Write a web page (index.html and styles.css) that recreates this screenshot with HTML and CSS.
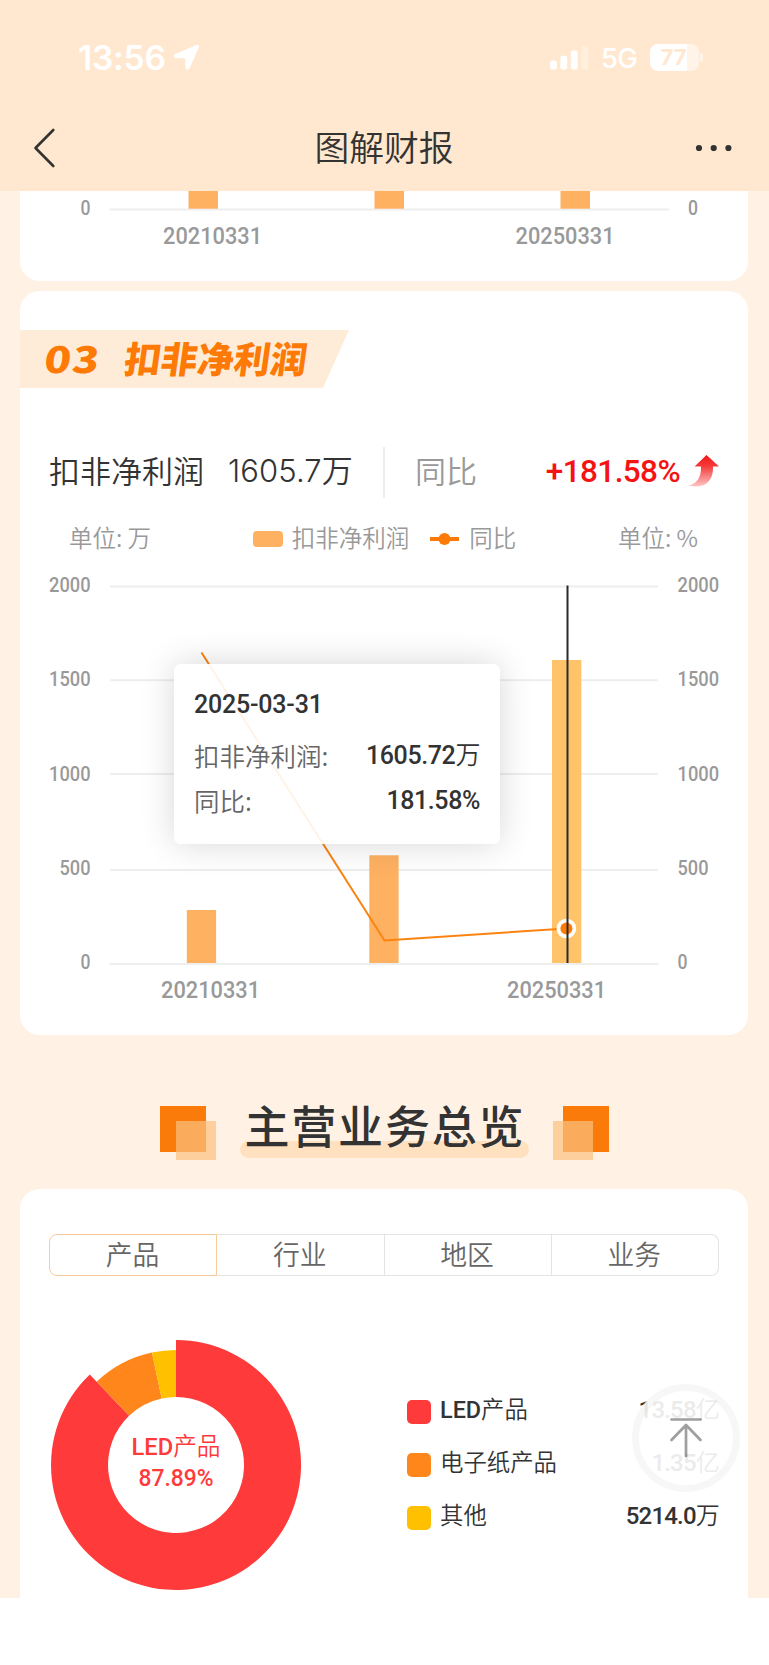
FILE: index.html
```html
<!DOCTYPE html>
<html lang="zh-CN">
<head>
    <meta charset="UTF-8">
    <meta name="viewport" content="width=device-width, initial-scale=1.0">
    <title>图解财报</title>
    <link rel="stylesheet" href="styles.css">
</head>
<body>
    <header class="header">
        <div class="status-bar">
            <div class="status-left">
                <span class="time">13:56</span>
                <svg width="27" height="27" viewBox="0 0 27 27"><path d="M24 1.2 L2.2 10.5 C.6 11.3 1 13.6 2.8 13.6 L12.6 13.8 L12.9 23.8 C13 25.6 15.3 26 16.1 24.4 L25.6 2.8 C26.1 1.6 25.2.7 24 1.2 Z" fill="#fff" stroke="#fff" stroke-width="1"/></svg>
            </div>
            <div class="status-right">
                <svg class="signal" width="39" height="24" viewBox="0 0 39 24" fill="#fff">
                    <rect x="0" y="14.5" width="6.8" height="9" rx="2"/>
                    <rect x="10.4" y="9.7" width="6.8" height="13.8" rx="2"/>
                    <rect x="20.8" y="4.5" width="6.8" height="19" rx="2"/>
                    <rect x="31.2" y="0" width="6.8" height="23.5" rx="2" opacity=".3"/>
                </svg>
                <span class="network">5G</span>
                <div class="battery">77</div>
                <span class="battery-cap"></span>
            </div>
        </div>
        <div class="nav">
            <svg width="24" height="40" viewBox="0 0 24 40"><path d="M20.3 2 L2.5 20 L20.3 38" fill="none" stroke="#333" stroke-width="2.6" stroke-linecap="round" stroke-linejoin="round"/></svg>
            <h1>图解财报</h1>
            <svg width="38" height="8" viewBox="0 0 38 8" fill="#333"><circle cx="4" cy="4" r="3.1"/><circle cx="18.7" cy="4" r="3.1"/><circle cx="33.4" cy="4" r="3.1"/></svg>
        </div>
    </header>

    <main class="content">
        <section class="card card-prev">
            <svg class="chart" width="728" height="90" viewBox="20 191 728 90">
                <line class="grid" x1="109.5" y1="209.5" x2="669" y2="209.5"/>
                <rect class="bar" x="188.5" y="185" width="29.5" height="23.7"/>
                <rect class="bar" x="374.5" y="185" width="29.5" height="23.7"/>
                <rect class="bar" x="560.5" y="185" width="29.5" height="23.7"/>
                <text class="axis" x="80.5" y="214.7" textLength="10" lengthAdjust="spacingAndGlyphs">0</text>
                <text class="axis" x="688" y="214.7" textLength="10" lengthAdjust="spacingAndGlyphs">0</text>
                <text class="axis-x" x="163" y="243.9" textLength="99" lengthAdjust="spacingAndGlyphs">20210331</text>
                <text class="axis-x" x="515.5" y="243.9" textLength="99" lengthAdjust="spacingAndGlyphs">20250331</text>
            </svg>
        </section>

        <section class="card card-profit">
            <div class="badge"><h2><span class="badge-no">03</span>扣非净利润</h2></div>
            <div class="summary">
                <span class="summary-name">扣非净利润</span>
                <span class="summary-value">1605.7万</span>
                <span class="summary-divider"></span>
                <span class="summary-label">同比</span>
                <span class="summary-rate">+181.58%</span>
                <svg class="summary-rise" width="31" height="32" viewBox="0 0 31 32">
                    <defs>
                        <linearGradient id="rise" x1="0" y1="0" x2="0" y2="1">
                            <stop offset="0" stop-color="#f51616"/>
                            <stop offset=".35" stop-color="#f53b3b"/>
                            <stop offset="1" stop-color="#fdc4c4"/>
                        </linearGradient>
                    </defs>
                    <path d="M18.5 0 L31 11.5 L25 11.5 C25.5 23 20 31.5 8 31.5 C5 31.5 2.5 31.2 0 30.6 C8 29.5 13.5 23 13 11.5 L6.5 11.5 Z" fill="url(#rise)"/>
                </svg>
            </div>
            <div class="legend">
                <span class="unit">单位: 万</span>
                <div class="legend-items">
                    <span class="swatch-bar"></span><span>扣非净利润</span>
                    <svg class="swatch-line" width="29" height="12" viewBox="0 0 29 12"><path d="M0 6 H29" stroke="#fc7a05" stroke-width="4"/><circle cx="14.5" cy="6" r="6" fill="#fc7a05"/></svg><span>同比</span>
                </div>
                <span class="unit">单位: %</span>
            </div>
            <div class="chart-box">
                <svg class="chart" width="728" height="440" viewBox="20 570 728 440">
                    <g class="grid">
                        <line x1="110" y1="586.5" x2="658" y2="586.5"/>
                        <line x1="110" y1="680.2" x2="658" y2="680.2"/>
                        <line x1="110" y1="774" x2="658" y2="774"/>
                        <line x1="110" y1="870" x2="658" y2="870"/>
                        <line x1="109.5" y1="964" x2="658.5" y2="964"/>
                    </g>
                    <rect class="bar" x="186.8" y="910" width="29.3" height="53"/>
                    <rect class="bar" x="369.3" y="855.3" width="29.3" height="107.7"/>
                    <rect class="bar bar-active" x="552" y="660" width="29.3" height="303"/>
                    <polyline points="201.5,652.5 384.5,940.5 566,928.5" fill="none" stroke="#fb8310" stroke-width="2"/>
                    <circle cx="566.4" cy="928.5" r="9.8" fill="#fff"/>
                    <circle cx="566.4" cy="928.5" r="6" fill="#fc7a05"/>
                    <line x1="567.5" y1="585.5" x2="567.5" y2="963" stroke="#2b2b2b" stroke-width="2"/>
                    <g class="axis">
                        <text x="49" y="592.2" textLength="41.5" lengthAdjust="spacingAndGlyphs">2000</text>
                        <text x="49" y="686.4" textLength="41.5" lengthAdjust="spacingAndGlyphs">1500</text>
                        <text x="49" y="780.5" textLength="41.5" lengthAdjust="spacingAndGlyphs">1000</text>
                        <text x="59.5" y="874.7" textLength="31" lengthAdjust="spacingAndGlyphs">500</text>
                        <text x="80.5" y="968.9" textLength="10" lengthAdjust="spacingAndGlyphs">0</text>
                        <text x="677.5" y="592.2" textLength="41.5" lengthAdjust="spacingAndGlyphs">2000</text>
                        <text x="677.5" y="686.4" textLength="41.5" lengthAdjust="spacingAndGlyphs">1500</text>
                        <text x="677.5" y="780.5" textLength="41.5" lengthAdjust="spacingAndGlyphs">1000</text>
                        <text x="677.5" y="874.7" textLength="31" lengthAdjust="spacingAndGlyphs">500</text>
                        <text x="677.5" y="968.9" textLength="10" lengthAdjust="spacingAndGlyphs">0</text>
                    </g>
                    <text class="axis-x" x="161" y="997.9" textLength="99" lengthAdjust="spacingAndGlyphs">20210331</text>
                    <text class="axis-x" x="507" y="997.9" textLength="99" lengthAdjust="spacingAndGlyphs">20250331</text>
                </svg>
                <div class="tooltip">
                    <div class="tooltip-date">2025-03-31</div>
                    <div class="tooltip-row"><span>扣非净利润:</span><b>1605.72万</b></div>
                    <div class="tooltip-row"><span>同比:</span><b>181.58%</b></div>
                </div>
            </div>
        </section>

        <div class="section-title">
            <svg width="56" height="56" viewBox="0 0 56 56"><rect width="46" height="46" fill="#fa7a0a"/><rect x="16" y="15" width="40" height="39" fill="#fbc17f" fill-opacity=".7"/></svg>
            <h2>主营业务总览</h2>
            <svg width="56" height="56" viewBox="0 0 56 56"><rect x="10" width="46" height="46" fill="#fa7a0a"/><rect y="15" width="40" height="39" fill="#fbc17f" fill-opacity=".7"/></svg>
        </div>

        <section class="card card-business">
            <div class="tabs">
                <div class="tab active">产品</div>
                <div class="tab">行业</div>
                <div class="tab">地区</div>
                <div class="tab">业务</div>
            </div>
            <div class="breakdown">
                <svg class="donut" width="252" height="252" viewBox="50 1339 252 252">
                    <path d="M176 1340 A125 125 0 1 1 89.8 1374.5 L129.1 1415.8 A68 68 0 1 0 176 1397 Z" fill="#ff3a3b"/>
                    <path d="M96.7 1381.7 A115 115 0 0 1 151.9 1352.6 L161.7 1398.5 A68 68 0 0 0 129.1 1415.8 Z" fill="#ff861b"/>
                    <path d="M151.9 1352.6 A115 115 0 0 1 176 1350 L176 1397 A68 68 0 0 0 161.7 1398.5 Z" fill="#ffc000"/>
                    <text x="176" y="1455.3" text-anchor="middle" textLength="89" lengthAdjust="spacingAndGlyphs">LED产品</text>
                    <text x="176" y="1486.3" text-anchor="middle" textLength="75" lengthAdjust="spacingAndGlyphs">87.89%</text>
                </svg>
                <ul class="product-list">
                    <li><i class="dot red"></i><span>LED产品</span><b>13.58亿</b></li>
                    <li><i class="dot orange"></i><span>电子纸产品</span><b>1.35亿</b></li>
                    <li><i class="dot yellow"></i><span>其他</span><b>5214.0万</b></li>
                </ul>
            </div>
        </section>
    </main>

    <div class="back-top">
        <svg width="36" height="42" viewBox="0 0 36 42" fill="none" stroke="#959595" stroke-width="2.7" stroke-linecap="round" stroke-linejoin="round"><path d="M3.5 2.5 H32.5 M18 8 V39 M3.5 23 L18 8 L32.5 23"/></svg>
    </div>
</body>
</html>
```
FILE: styles.css
```css
* {
    box-sizing: border-box;
}
body {
    margin: 0;
    width: 769px;
    height: 1665px;
    overflow: hidden;
    position: relative;
    background: #fff;
    color: #333;
    font-family: Roboto, "Noto Sans CJK SC DemiLight", "Noto Sans CJK SC", sans-serif;
}
h1, h2, ul {
    margin: 0;
    padding: 0;
}
svg {
    display: block;
    flex: none;
}
.header {
    height: 191px;
    background: #ffe8cf;
}
.status-bar {
    height: 115px;
    padding: 0 66px 0 78px;
    display: flex;
    justify-content: space-between;
    align-items: center;
    color: #fff;
    font-family: Inter, sans-serif;
}
.status-left, .status-right {
    display: flex;
    align-items: center;
}
.status-left {
    gap: 7px;
}
.time {
    font-size: 33.5px;
    font-weight: 600;
    letter-spacing: -0.2px;
}
.network {
    margin-left: 12px;
    width: 38px;
    font-size: 27.5px;
    font-weight: 500;
    letter-spacing: -0.8px;
}
.battery {
    margin-left: 11px;
    width: 49px;
    height: 27px;
    padding-right: 2px;
    border-radius: 8px;
    background: linear-gradient(to right, #fff 37px, #fff4e7 37px);
    color: #ffe8cf;
    font-size: 22px;
    font-weight: 700;
    line-height: 27px;
    text-align: center;
}
.battery-cap {
    width: 3px;
    height: 9px;
    margin-left: 1px;
    border-radius: 0 4px 4px 0;
    background: #fff4e7;
}
.nav {
    height: 66px;
    padding: 0 36px 0 33px;
    display: flex;
    align-items: center;
    justify-content: space-between;
}
.nav h1 {
    margin: -5px 0 0 16px;
    font: 350 34.8px/60px "Noto Sans CJK SC", sans-serif;
}
.content {
    height: 1407px;
    padding: 0 21px 0 20px;
    background: #fff2e4;
    overflow: hidden;
}
.card {
    background: #fff;
    border-radius: 20px;
}
.chart {
    font-family: Roboto, sans-serif;
}
.grid {
    stroke: #eee;
    stroke-width: 2;
}
.bar {
    fill: #feb161;
}
.bar-active {
    fill: #ffc46a;
}
.axis {
    font-size: 20px;
    font-weight: 500;
    fill: #999;
}
.axis-x {
    font-size: 24px;
    font-weight: 500;
    fill: #999;
}
.card-prev {
    height: 90px;
    border-radius: 0 0 20px 20px;
}
.card-profit {
    margin-top: 10px;
    height: 744px;
    padding-top: 39px;
}
.badge {
    width: 329px;
    height: 58px;
    padding-left: 25px;
    background: #ffecd8;
    clip-path: polygon(0 0, 100% 0, 303px 100%, 0 100%);
}
.badge h2 {
    color: #fc7a05;
    font: 900 36.5px/54px "Noto Sans CJK SC", sans-serif;
    transform: skewX(-8deg);
}
.badge-no {
    display: inline-block;
    width: 80px;
    font-size: 36px;
    letter-spacing: 1px;
    transform: scaleX(1.22);
    transform-origin: left;
}
.summary {
    margin-top: 59px;
    height: 51px;
    padding: 0 29px;
    display: flex;
    align-items: center;
    font: 350 31px/45px "Noto Sans CJK SC", sans-serif;
    white-space: nowrap;
}
.summary-name, .summary-label {
    margin-top: -6px;
}
.summary-value {
    margin-top: -5px;
    margin-left: 24px;
    width: 125px;
    font-family: Inter, "Noto Sans CJK SC", sans-serif;
    letter-spacing: 0.1px;
}
.summary-divider {
    margin-left: 30px;
    width: 2px;
    height: 51px;
    background: #eee;
}
.summary-label {
    margin-left: 30px;
    color: #999;
}
.summary-rate {
    margin-top: -2px;
    margin-left: auto;
    margin-right: 8px;
    color: #f51212;
    font-family: Roboto, sans-serif;
    font-size: 31.5px;
    font-weight: 500;
    letter-spacing: -0.6px;
}
.summary-rise {
    margin-top: -4px;
}
.legend {
    margin-top: 21px;
    height: 40px;
    padding: 0 50px 0 49px;
    display: flex;
    align-items: center;
    justify-content: space-between;
    color: #999;
    font: 350 23.5px/36px "Noto Sans CJK SC", sans-serif;
}
.legend span {
    padding-bottom: 4px;
}
.legend-items {
    display: flex;
    align-items: center;
}
.swatch-bar {
    width: 30px;
    height: 16px;
    margin-right: 9px;
    border-radius: 4px;
    background: #feb161;
}
.swatch-line {
    margin: 0 10px 0 21px;
}
.chart-box {
    position: relative;
    margin-top: 11px;
}
.tooltip {
    position: absolute;
    left: 154px;
    top: 94px;
    width: 326px;
    height: 180px;
    padding: 21px 20px 0 20px;
    border-radius: 7px;
    background: rgba(255, 255, 255, 0.9);
    box-shadow: 0 0 34px rgba(0, 0, 0, 0.16);
}
.tooltip-date {
    height: 49px;
    font-size: 25px;
    font-weight: 500;
    line-height: 40px;
    letter-spacing: -0.2px;
}
.tooltip-row {
    height: 44.5px;
    display: flex;
    justify-content: space-between;
    color: #666;
    font-size: 25.5px;
    font-weight: 350;
    line-height: 42px;
}
.tooltip-row span {
    font-family: "Noto Sans CJK SC", sans-serif;
}
.tooltip-row b {
    color: #333;
    font-family: Roboto, "Noto Sans CJK SC DemiLight", "Noto Sans CJK SC", sans-serif;
    font-size: 25px;
    font-weight: 500;
    line-height: 44px;
    letter-spacing: -0.4px;
}
.section-title {
    height: 154px;
    padding-top: 71px;
    display: flex;
    align-items: flex-start;
    justify-content: center;
}
.section-title h2 {
    position: relative;
    z-index: 0;
    width: 289px;
    margin: -14px 24px 0;
    padding-left: 5px;
    font: 500 45px/66px "Noto Sans CJK SC", sans-serif;
    letter-spacing: 1.8px;
    white-space: nowrap;
}
.section-title h2::before {
    content: "";
    position: absolute;
    z-index: -1;
    left: 0;
    top: 49px;
    width: 289px;
    height: 17px;
    border-radius: 9px;
    background: #ffe1bf;
}
.card-business {
    height: 440px;
    padding: 45px 29px 0;
}
.tabs {
    height: 42px;
    display: flex;
}
.tab {
    flex: 1;
    padding-right: 1px;
    border: 1px solid #e4e4e4;
    border-left: none;
    color: #666;
    font: 350 26.8px/37px "Noto Sans CJK SC", sans-serif;
    text-align: center;
}
.tab.active {
    border: 1px solid #fcc99a;
    border-radius: 8px 0 0 8px;
}
.tab:last-child {
    border-radius: 0 8px 8px 0;
}
.breakdown {
    margin-top: 63px;
    padding-left: 1px;
    display: flex;
    justify-content: space-between;
}
.donut text {
    fill: #ff3a3b;
    font-size: 24.5px;
    font-weight: 500;
}
.product-list {
    width: 312px;
    padding-top: 45px;
    list-style: none;
}
.product-list li {
    height: 53px;
    display: flex;
    align-items: center;
    font-size: 23.4px;
    font-weight: 500;
    line-height: 53px;
}
.product-list b {
    margin-left: auto;
    font-size: 24px;
    font-weight: 500;
    letter-spacing: -0.8px;
}
.dot {
    width: 24px;
    height: 24px;
    margin: 3px 9px 0 0;
    border-radius: 5px;
}
.red {
    background: #ff3a3b;
}
.orange {
    background: #ff861b;
}
.yellow {
    background: #ffc000;
}
.back-top {
    position: absolute;
    left: 632px;
    top: 1384px;
    width: 108px;
    height: 108px;
    display: flex;
    align-items: center;
    justify-content: center;
    border: 7px solid #f7f7f7;
    border-radius: 50%;
    background: #fff;
    opacity: 0.9;
}
```
